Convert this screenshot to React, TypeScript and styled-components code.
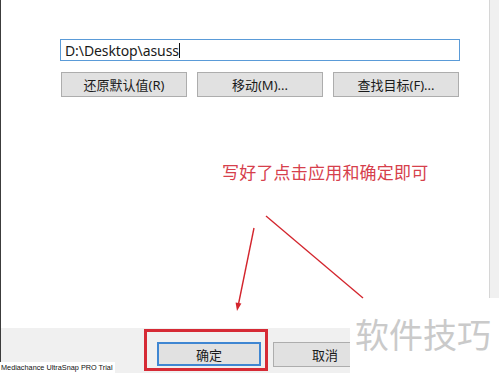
import React from "react";
import styled, { createGlobalStyle } from "styled-components";

const GlobalStyle = createGlobalStyle`
  html, body {
    margin: 0;
    padding: 0;
    background: #fff;
  }
`;

const uiFont = `"Noto Sans", "Noto Sans CJK SC", sans-serif`;

const Frame = styled.div`
  position: relative;
  width: 500px;
  height: 373px;
  overflow: hidden;
  background: #fff;
  display: flex;
  flex-direction: column;
  font-family: ${uiFont};
  color: #1a1a1a;
`;

const Panel = styled.div`
  flex: 0 0 328px;
  display: flex;
  border-left: 1px solid #3c3c3c;
`;

const Body = styled.div`
  flex: 1;
  padding: 39px 0 0 59px;
  display: flex;
  flex-direction: column;
`;

const ScrollStrip = styled.div`
  width: 9px;
  height: 298px;
  margin-right: 1px;
  background: #f0f0f0;
  border-left: 1px solid #d6d6d6;
`;

const PathInput = styled.div`
  width: 400px;
  height: 22px;
  box-sizing: border-box;
  border: 1px solid #5a9bd8;
  display: flex;
  align-items: center;
  padding-left: 4px;
  font-size: 14px;
  letter-spacing: -0.1px;
`;

const Caret = styled.span`
  display: inline-block;
  width: 1px;
  height: 15px;
  background: #111;
`;

const ButtonRow = styled.div`
  display: flex;
  gap: 10px;
  margin-top: 11px;
  padding-left: 1px;
`;

const WinButton = styled.div<{ $width: number; $default?: boolean }>`
  width: ${(p) => p.$width}px;
  height: ${(p) => (p.$default ? 24 : 25)}px;
  box-sizing: border-box;
  background: #e1e1e1;
  border: ${(p) => (p.$default ? "2px solid #3f86d2" : "1px solid #adadad")};
  display: flex;
  align-items: center;
  justify-content: center;
  font-size: 13px;
  color: #1a1a1a;
`;

const Note = styled.div`
  margin: 66px 0 0 162px;
  font-family: "Noto Sans CJK SC", sans-serif;
  font-size: 17px;
  line-height: 17px;
  color: #d6404c;
  letter-spacing: 0.2px;
`;

const BottomBar = styled.div`
  flex: 1;
  display: flex;
  gap: 12px;
  padding: 14px 0 0 156px;
  background: #f0f0f0;
  border-left: 1px solid #3c3c3c;
`;

const Highlight = styled.div`
  position: absolute;
  left: 144px;
  top: 329px;
  width: 124px;
  height: 42px;
  box-sizing: border-box;
  border: 3px solid #d62a35;
`;

const Arrows = styled.svg`
  position: absolute;
  inset: 0;
  pointer-events: none;
`;

const Watermark = styled.div`
  position: absolute;
  left: 350px;
  top: 314px;
  right: 0;
  bottom: 0;
  background: #fff;
  padding: 3px 0 0 5px;
  font-family: "Noto Sans CJK SC", sans-serif;
  font-size: 34px;
  line-height: 34px;
  color: #cacaca;
`;

const TrialLabel = styled.div`
  position: absolute;
  left: 0;
  bottom: 0;
  height: 11px;
  padding: 0 2px 0 1px;
  background: #fff;
  font-family: "Liberation Sans", sans-serif;
  font-size: 7.3px;
  line-height: 11px;
  color: #111;
`;

export default function App() {
  return (
    <>
      <GlobalStyle />
      <Frame>
        <Panel>
          <Body>
            <PathInput>
              {"D:\\Desktop\\asuss"}
              <Caret />
            </PathInput>
            <ButtonRow>
              <WinButton $width={126}>还原默认值(R)</WinButton>
              <WinButton $width={126}>移动(M)...</WinButton>
              <WinButton $width={126}>查找目标(F)...</WinButton>
            </ButtonRow>
            <Note>写好了点击应用和确定即可</Note>
          </Body>
          <ScrollStrip />
        </Panel>
        <BottomBar>
          <WinButton $width={104} $default>
            确定
          </WinButton>
          <WinButton $width={104}>取消</WinButton>
        </BottomBar>
        <Highlight />
        <Arrows width="500" height="373" viewBox="0 0 500 373">
          <line x1="254" y1="228" x2="238.5" y2="304" stroke="#d3242c" strokeWidth="1.4" />
          <polygon points="237,311 241.4,303.6 235.6,302.4" fill="#d3242c" />
          <line x1="266" y1="216" x2="363" y2="298" stroke="#d3242c" strokeWidth="1.3" />
        </Arrows>
        <Watermark>软件技巧</Watermark>
        <TrialLabel>Mediachance UltraSnap PRO Trial</TrialLabel>
      </Frame>
    </>
  );
}
